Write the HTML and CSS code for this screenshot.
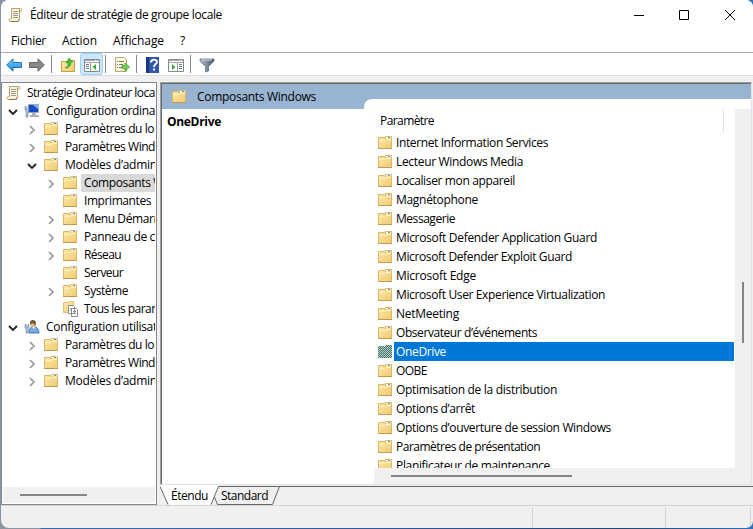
FILE: index.html
```html
<!DOCTYPE html>
<html lang="fr">
<head>
<meta charset="utf-8">
<title>Éditeur de stratégie de groupe locale</title>
<link rel="stylesheet" href="styles.css">
</head>
<body>
<svg class="defs" width="0" height="0">
  <defs>
    <linearGradient id="gold" x1="0" y1="0" x2="1" y2="1"><stop offset="0" stop-color="#ffe9a9"/><stop offset="1" stop-color="#efca72"/></linearGradient>
    <linearGradient id="sky" x1="0" y1="0" x2="0" y2="1"><stop offset="0" stop-color="#7fd0fb"/><stop offset="1" stop-color="#1585dc"/></linearGradient>
    <linearGradient id="steel" x1="0" y1="0" x2="1" y2="0"><stop offset="0" stop-color="#b9c4cf"/><stop offset="1" stop-color="#435568"/></linearGradient>
    <pattern id="dither" width="2" height="2" patternUnits="userSpaceOnUse"><path fill="#e2c779" d="M0 0h2v2H0z"/><path fill="#1878bd" d="M0 0h1v1H0zM1 1h1v1H1z"/></pattern>
    <symbol id="folder" viewBox="0 0 16 16">
      <path d="M1.500 13.500v-11h5.500l1.500 1v-2h6v12z" fill="url(#gold)" stroke="#dbb768"/>
      <path d="M9 2h5v1H9z" fill="#fff"/><path d="M11 2h2v1h-2z" fill="#48a2dc"/>
      <path d="M2 5.500h6l1-1h5" fill="none" stroke="#fff2c4"/><path d="M1 13.500h14" stroke="#c39a4c"/>
    </symbol>
    <symbol id="folder-selected" viewBox="0 0 16 16"><path d="M1 14V2h6l1 1V1h7v13z" fill="url(#dither)"/></symbol>
    <symbol id="scroll" viewBox="0 0 16 16">
      <path d="M3.500 1.500h9c2 0 2 3 0 3h-1v8c0 2-1 2-2 2h-7c-2 0-2-3 0-3h1z" fill="#fbf3d5" stroke="#b6a371"/>
      <path d="M11.500 4.500v-2M2.500 14.500h7c1 0 1-1 1-2" fill="none" stroke="#85744d"/>
      <path d="M5 4.500h5M5 6.500h5M5 8.500h5M5 10.500h5" stroke="#9b9b91"/>
    </symbol>
    <symbol id="computer" viewBox="0 0 16 16">
      <path d="M4.500 1.500h10v8h-10z" fill="#1749c4" stroke="#9ca9b7"/><path d="M9 2h5v4z" fill="#79b6f4"/>
      <path d="M8 10h4v2h3v2H6v-2h2z" fill="#a5b0bb"/><path d="M1 4l1-1v3h2V3l1 1v3L4 8v6H2V8L1 7z" fill="#b6cbe0" stroke="#587896" stroke-width=".6"/>
    </symbol>
    <symbol id="user" viewBox="0 0 16 16">
      <path d="M5 14c0-5 2-6 5-6s5 2 5 6z" fill="#78ace0" stroke="#4279ae"/><circle cx="9" cy="5" r="3" fill="#dfb477"/>
      <path d="M6 5c-1-5 6-5 6-1L11 7l-1-3z" fill="#6e5530"/><path d="M8 8l2 2 1-2z" fill="#fff"/>
      <path d="M1 6l1-1v3h2V5l1 1v3L4 10v4H2v-4L1 9z" fill="#b6cbe0" stroke="#587896" stroke-width=".6"/>
    </symbol>
    <symbol id="folder-pages" viewBox="0 0 16 16">
      <path d="M1.500 11.500v-10h5l1-1h4v11z" fill="url(#gold)" stroke="#e5c170"/>
      <path d="M6.500 4.500h5l1 1v7h-6zM9.500 7.500h5l1 1v7h-6z" fill="#fff" stroke="#8e8e8e"/>
      <path d="M8 7.500h2M8 9.500h1M11 10.500h3M11 12.500h3" stroke="#8e8e8e"/>
    </symbol>
    <symbol id="arrow" viewBox="0 0 16 16"><path d="M.7 8L7 1.800V5.500h8.500v5H7v3.700z"/></symbol>
    <symbol id="pane" viewBox="0 0 16 16">
      <path d="M.5 2.500h15v12H.5z" fill="#fff" stroke="#898989"/><path d="M1 3.500h14M1 5.500h14" stroke="#a4a4a4"/><path d="M11 3.500h1M13 3.500h1" stroke="#fff"/>
    </symbol>
    <symbol id="chevron" viewBox="0 0 10 10"><path d="M3 1l4 4-4 4" fill="none" stroke="#969696" stroke-width="1.600"/></symbol>
    <symbol id="open" viewBox="0 0 10 10"><path d="M1 3l4 4 4-4" fill="none" stroke="#222" stroke-width="1.800"/></symbol>
  </defs>
</svg>
<div class="window">
  <header class="title"><svg class="i"><use href="#scroll"/></svg><span class="caption" data-w="192">Éditeur de stratégie de groupe locale</span>
    <svg class="controls" viewBox="0 0 104 12"><path d="M0 6.500h10M45.500 1.500h9v9h-9zM91 1l10 10M101 1L91 11" fill="none" stroke="#000"/></svg></header>
  <nav class="menu"><span data-w="35">Fichier</span><span data-w="35">Action</span><span data-w="51">Affichage</span><span data-w="5">?</span></nav>
  <div class="toolbar">
    <svg class="i back"><use href="#arrow"/></svg>
    <svg class="i forward"><use href="#arrow" transform="translate(16 0) scale(-1 1)"/></svg>
    <i class="sep s1"></i>
    <svg class="i up" viewBox="0 0 16 16"><path d="M1.500 14.500v-10h6l1.500-1h5.500v11z" fill="url(#gold)" stroke="#c49e4e"/><path d="M5 11c3-1 3-3 3-5H6l3-5 4 4h-2c0 4-2 6-6 6z" fill="#42bd35" stroke="#279022" stroke-width=".5"/></svg>
    <span class="active"><svg class="i" viewBox="0 0 16 16"><use href="#pane"/><path d="M6.500 6v8" stroke="#999"/><path d="M2 7.500h3M2 9.500h3M2 11.500h3" stroke="#687d92"/><path d="M12 7v6L8.500 10z" fill="#35ad2b"/></svg></span>
    <i class="sep s2"></i>
    <svg class="i export" viewBox="0 0 16 16"><path d="M1.500.500h9l2 2v12h-11z" fill="#fffbe0" stroke="#b7a877"/><path d="M3 4.500h1M5 4.500h5M3 7.500h1M5 7.500h4M3 10.500h1M5 10.500h3" stroke="#777"/><path d="M8 8.500h3V6l4.500 4-4.500 4v-2.500H8z" fill="#72ce4e" stroke="#389b28" stroke-width=".7"/></svg>
    <i class="sep s3"></i>
    <svg class="i help" viewBox="0 0 16 16"><path d="M1 0h13v16H1z" fill="#3157ad"/><path d="M1 0h3v16H1z" fill="#18377e"/><path d="M6 5.500c0-3.500 6-3.500 6-.5 0 2-3 2-3 5" fill="none" stroke="#fff" stroke-width="1.900"/><path d="M8 11.500h2v2H8z" fill="#fff"/></svg>
    <svg class="i action" viewBox="0 0 16 16"><use href="#pane"/><path d="M9.500 6v8" stroke="#999"/><path d="M11 7.500h3M11 9.500h3M11 11.500h3" stroke="#687d92"/><path d="M4 7v6l3.500-3z" fill="#35ad2b"/></svg>
    <i class="sep s4"></i>
    <svg class="i" viewBox="0 0 16 16"><path d="M1 2h14v2L9.500 9.500V14L6.500 15V9.500L1 4z" fill="url(#steel)" stroke="#526475" stroke-width=".7"/><path d="M3 3h10" stroke="#d9e0e6"/></svg>
  </div>
  <main class="body">
    <aside class="tree">
      <ul class="nodes">
        <li class="root"><svg class="i"><use href="#scroll"/></svg><span data-w="128">Stratégie Ordinateur loca</span></li>
        <li class="l1"><svg class="c"><use href="#open"/></svg><svg class="i"><use href="#computer"/></svg><span data-w="109">Configuration ordina</span></li>
        <li class="l2"><svg class="c"><use href="#chevron"/></svg><svg class="i"><use href="#folder"/></svg><span data-w="89">Paramètres du lo</span></li>
        <li class="l2"><svg class="c"><use href="#chevron"/></svg><svg class="i"><use href="#folder"/></svg><span data-w="90">Paramètres Wind</span></li>
        <li class="l2"><svg class="c"><use href="#open"/></svg><svg class="i"><use href="#folder"/></svg><span data-w="92">Modèles d’admin</span></li>
        <li class="l3"><svg class="c"><use href="#chevron"/></svg><svg class="i"><use href="#folder"/></svg><span class="chosen" data-w="80">Composants W</span></li>
        <li class="l3"><svg class="c"></svg><svg class="i"><use href="#folder"/></svg><span data-w="67">Imprimantes</span></li>
        <li class="l3"><svg class="c"><use href="#chevron"/></svg><svg class="i"><use href="#folder"/></svg><span data-w="74">Menu Démarr</span></li>
        <li class="l3"><svg class="c"><use href="#chevron"/></svg><svg class="i"><use href="#folder"/></svg><span data-w="71">Panneau de c</span></li>
        <li class="l3"><svg class="c"><use href="#chevron"/></svg><svg class="i"><use href="#folder"/></svg><span data-w="37">Réseau</span></li>
        <li class="l3"><svg class="c"></svg><svg class="i"><use href="#folder"/></svg><span data-w="39">Serveur</span></li>
        <li class="l3"><svg class="c"><use href="#chevron"/></svg><svg class="i"><use href="#folder"/></svg><span data-w="44">Système</span></li>
        <li class="l3"><svg class="c"></svg><svg class="i"><use href="#folder-pages"/></svg><span data-w="74">Tous les paran</span></li>
        <li class="l1"><svg class="c"><use href="#open"/></svg><svg class="i"><use href="#user"/></svg><span data-w="111">Configuration utilisat</span></li>
        <li class="l2"><svg class="c"><use href="#chevron"/></svg><svg class="i"><use href="#folder"/></svg><span data-w="89">Paramètres du lo</span></li>
        <li class="l2"><svg class="c"><use href="#chevron"/></svg><svg class="i"><use href="#folder"/></svg><span data-w="90">Paramètres Wind</span></li>
        <li class="l2"><svg class="c"><use href="#chevron"/></svg><svg class="i"><use href="#folder"/></svg><span data-w="92">Modèles d’admin</span></li>
      </ul>
      <div class="tree-scroll"><i></i></div>
    </aside>
    <section class="right">
      <div class="frame">
        <div class="banner"><svg class="i"><use href="#folder"/></svg><span data-w="119">Composants Windows</span></div>
        <div class="content">
          <h1 class="description"><span data-w="54">OneDrive</span></h1>
          <div class="listing">
            <div class="list">
              <div class="column"><span data-w="54">Paramètre</span></div>
              <ul class="items">
                <li><svg class="i"><use href="#folder"/></svg><span data-w="152">Internet Information Services</span></li>
                <li><svg class="i"><use href="#folder"/></svg><span data-w="127">Lecteur Windows Media</span></li>
                <li><svg class="i"><use href="#folder"/></svg><span data-w="119">Localiser mon appareil</span></li>
                <li><svg class="i"><use href="#folder"/></svg><span data-w="82">Magnétophone</span></li>
                <li><svg class="i"><use href="#folder"/></svg><span data-w="59">Messagerie</span></li>
                <li><svg class="i"><use href="#folder"/></svg><span data-w="201">Microsoft Defender Application Guard</span></li>
                <li><svg class="i"><use href="#folder"/></svg><span data-w="176">Microsoft Defender Exploit Guard</span></li>
                <li><svg class="i"><use href="#folder"/></svg><span data-w="80">Microsoft Edge</span></li>
                <li><svg class="i"><use href="#folder"/></svg><span data-w="209">Microsoft User Experience Virtualization</span></li>
                <li><svg class="i"><use href="#folder"/></svg><span data-w="63">NetMeeting</span></li>
                <li><svg class="i"><use href="#folder"/></svg><span data-w="141">Observateur d’événements</span></li>
                <li class="selected"><svg class="i"><use href="#folder-selected"/></svg><span data-w="50">OneDrive</span></li>
                <li><svg class="i"><use href="#folder"/></svg><span data-w="31">OOBE</span></li>
                <li><svg class="i"><use href="#folder"/></svg><span data-w="161">Optimisation de la distribution</span></li>
                <li><svg class="i"><use href="#folder"/></svg><span data-w="79">Options d’arrêt</span></li>
                <li><svg class="i"><use href="#folder"/></svg><span data-w="215">Options d’ouverture de session Windows</span></li>
                <li><svg class="i"><use href="#folder"/></svg><span data-w="144">Paramètres de présentation</span></li>
                <li><svg class="i"><use href="#folder"/></svg><span data-w="154">Planificateur de maintenance</span></li>
              </ul>
              <div class="hscroll"><i></i></div>
            </div>
            <div class="vscroll"><i></i></div>
          </div>
        </div>
      </div>
      <div class="tabs">
        <svg class="tab-lines" viewBox="0 0 593 20"><path d="M0 1.500L8 19.500h43L58.500 1.500V0H0z" fill="#fff"/><path d="M0 1.500L8 19.500M51 19.500L58.500 1.500H593M119.500 1.500l-7 18H57.500L54.500 12" fill="none" stroke="#666"/></svg>
        <span class="tab first" data-w="37">Étendu</span><span class="tab" data-w="47">Standard</span>
      </div>
    </section>
  </main>
  <footer class="status"><i></i><i></i><i></i></footer>
</div>
<script src="fit.js"></script>
</body>
</html>
```
FILE: fit.js
```js
document.querySelectorAll('[data-w]').forEach(function (el) {
  var range = document.createRange();
  range.selectNodeContents(el);
  var gap = Number(el.dataset.w) - range.getBoundingClientRect().width;
  el.style.letterSpacing = (gap / el.textContent.length).toFixed(3) + 'px';
});
```
FILE: styles.css
```css
* { box-sizing: border-box; }
html, body { margin: 0; width: 753px; height: 529px; overflow: hidden; }
body { background: linear-gradient(90deg, #8995a3 0 40px, #376aae 41px 120px, #2c579d 400px, #204774 620px, #2872bd); font: 12px/18px "Open Sans", "Noto Sans", sans-serif; color: #000; }
ul { list-style: none; margin: 0; padding: 0; }
svg, i { display: block; flex: none; }
.defs { position: absolute; }
.i { width: 16px; height: 16px; }
.window { display: flex; flex-direction: column; width: 752px; height: 528px; margin-left: 1px; background: #f0f0f0; border-radius: 8px 7px 7px 8px; overflow: hidden; white-space: nowrap; }
.title { display: flex; align-items: center; height: 31px; padding: 0 0 1px 7px; background: #fff; }
.caption { margin-left: 6px; }
.controls { width: 104px; height: 12px; margin: 0 15px 0 auto; }
.menu { display: flex; gap: 16px; height: 21px; padding: 1px 10px; background: #fff; }
.toolbar { display: flex; align-items: center; height: 24px; padding-left: 5px; background: #fff; border-top: 1px solid #aaa; border-bottom: 1px solid #dcdcdc; }
.toolbar .i { margin-top: 2px; }
.back { fill: url(#sky); stroke: #1875b9; }
.forward { margin-left: 7px; fill: #898989; stroke: #666; }
.sep { width: 1px; height: 18px; background: #8a8a8a; }
.s1 { margin-left: 6px; }
.up { margin-left: 8px; }
.active { width: 23px; height: 22px; margin-left: 4px; padding: 1px 3px; background: #cce8ff; border: 1px solid #99d1ff; border-radius: 3px; }
.s2 { margin-left: 2px; }
.export { margin-left: 8px; }
.s3 { margin-left: 6px; }
.help { margin-left: 8px; }
.action { margin-left: 7px; }
.s4 { margin: 0 8px 0 6px; }
.body { display: flex; height: 423px; margin-top: 6px; }
.tree { width: 156px; height: 423px; padding: 2px 1px 1px; border: 1px solid #828790; background: #fff; display: flex; flex-direction: column; }
.nodes { height: 403px; margin-top: -1px; overflow: hidden; }
.nodes li { display: flex; align-items: center; height: 18px; }
.c { width: 10px; height: 10px; margin: 2px 6px 0 0; }
.nodes .i { margin-right: 6px; }
.nodes .root .i { margin-right: 5px; }
.root { padding-left: 3px; }
.l1 { padding-left: 5px; }
.l2 { padding-left: 24px; }
.l3 { padding-left: 43px; }
.chosen { background: #d9d9d9; box-shadow: -3px 0 #d9d9d9; }
.tree-scroll { height: 16px; padding: 7px 17px; background: #f0f0f0; }
.tree-scroll i, .hscroll i { height: 2px; background: #858585; }
.tree-scroll i { width: 67px; }
.right { width: 593px; margin-left: 3px; }
.frame { width: 592px; height: 403px; padding: 1px 0 0 1px; border: 1px solid; border-color: #a0a0a0 #e3e3e3 #e3e3e3 #a0a0a0; background: #696969; }
.banner { display: flex; align-items: center; height: 25px; padding-left: 9px; background: #99b4d1; }
.banner span { margin-left: 10px; }
.content { display: flex; height: 375px; background: #fff; }
.description { width: 212px; margin: 0; padding: 4px 5px; font-size: 12px; line-height: 18px; font-weight: 700; }
.listing { display: flex; flex: none; width: 387px; height: 385px; margin: -10px 0 0 -10px; padding: 10px 0 0 10px; background: #fff; border-top-left-radius: 8px; }
.list { width: 361px; display: flex; flex-direction: column; }
.column { width: 350px; height: 24px; padding: 3px 6px; border-right: 1px solid #e2e2e2; }
.items { height: 335px; overflow: hidden; }
.items li { display: flex; align-items: center; height: 19px; padding-left: 3px; }
.items span { flex: 1; margin: 0 1px; padding-left: 2px; line-height: 19px; }
.selected span { background: #0078d7; color: #fff; }
.hscroll { height: 16px; width: 377px; padding: 7px 17px; background: #f0f0f0; }
.hscroll i { width: 181px; }
.vscroll { width: 16px; height: 375px; padding: 173px 7px; background: #f0f0f0; }
.vscroll i { width: 2px; height: 61px; background: #858585; }
.tabs { position: relative; display: flex; height: 20px; }
.tab-lines { position: absolute; inset: 0; width: 593px; height: 20px; }
.tab { position: relative; margin-left: 13px; line-height: 22px; }
.first { margin-left: 11px; }
.status { display: flex; height: 23px; border-top: 1px solid #d5d5d5; }
.status i { width: 133px; margin-top: 1px; border-right: 1px solid #d2d2d2; }
.status i:first-child { width: 532px; }
.status i:last-child { width: 85px; }
```
